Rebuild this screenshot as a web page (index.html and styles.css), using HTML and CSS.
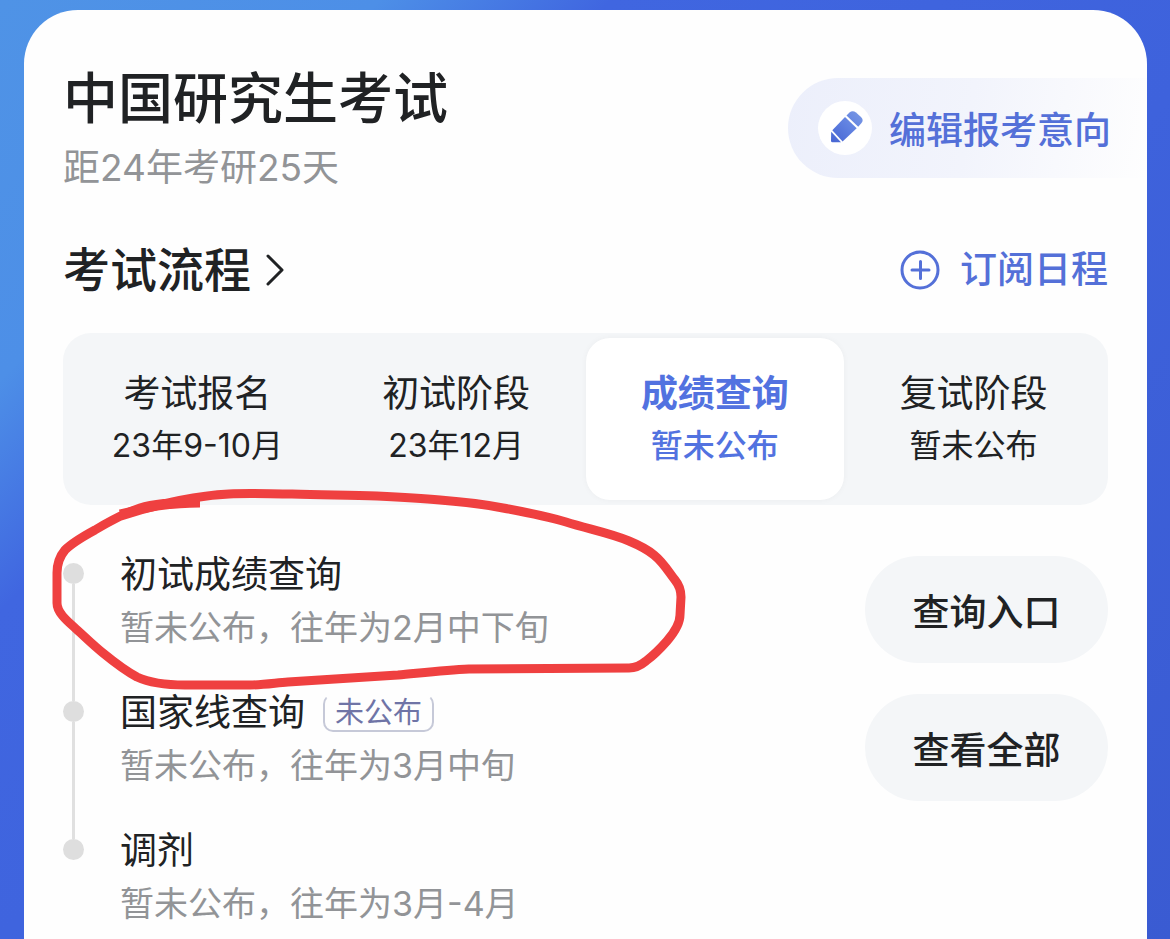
FILE: index.html
```html
<!DOCTYPE html>
<html lang="zh-CN">
<head>
    <meta charset="UTF-8">
    <meta name="viewport" content="width=device-width, initial-scale=1.0">
    <title>中国研究生考试</title>
    <link rel="stylesheet" href="styles.css">
</head>
<body>
    <main class="card">
        <header class="card-header">
            <div>
                <h1>中国研究生考试</h1>
                <p class="countdown">距24年考研25天</p>
            </div>
            <button type="button" class="edit-btn">
                <span class="edit-icon">
                    <svg viewBox="0 0 54 54" width="54" height="54" aria-hidden="true">
                        <defs>
                            <linearGradient id="pencil" gradientUnits="userSpaceOnUse" x1="42" y1="12" x2="16" y2="40">
                                <stop offset="0" stop-color="#7796e4"/>
                                <stop offset="0.500" stop-color="#5f80e0"/>
                                <stop offset="1" stop-color="#4a68d4"/>
                            </linearGradient>
                        </defs>
                        <g fill="url(#pencil)">
                            <path d="M28.500 14.500 31.500 11.500Q34.500 8.800 38 11.500L43 16Q46 19 43.500 22L40.200 25.800Z"/>
                            <path d="M27 16 38.700 27.200 24.600 40.600 14.300 29.300Z"/>
                            <path d="M13.200 30.800 23 41.300 14.500 41.300Q13 41.300 13 39.800Z"/>
                        </g>
                    </svg>
                </span>
                编辑报考意向
            </button>
        </header>

        <div class="section-header">
            <h2>
                <a href="#process" class="section-link">考试流程
                    <svg viewBox="0 0 20 34" width="20" height="34" aria-hidden="true">
                        <path d="M3 3 17 17 3 31" fill="none" stroke="currentColor" stroke-width="3" stroke-linecap="round" stroke-linejoin="round"/>
                    </svg>
                </a>
            </h2>
            <button type="button" class="subscribe-btn">
                <svg viewBox="0 0 40 40" width="40" height="40" aria-hidden="true">
                    <g fill="none" stroke="currentColor" stroke-width="3" stroke-linecap="round">
                        <circle cx="20" cy="20" r="18"/>
                        <path d="M12 20h17M20.500 11.500v17"/>
                    </g>
                </svg>
                订阅日程
            </button>
        </div>

        <div class="tabs" role="tablist" id="process">
            <button type="button" class="tab" role="tab" aria-selected="false">
                <span class="tab-name">考试报名</span>
                <span class="tab-date">23年9-10月</span>
            </button>
            <button type="button" class="tab" role="tab" aria-selected="false">
                <span class="tab-name">初试阶段</span>
                <span class="tab-date">23年12月</span>
            </button>
            <button type="button" class="tab active" role="tab" aria-selected="true">
                <span class="tab-name">成绩查询</span>
                <span class="tab-date">暂未公布</span>
            </button>
            <button type="button" class="tab" role="tab" aria-selected="false">
                <span class="tab-name">复试阶段</span>
                <span class="tab-date">暂未公布</span>
            </button>
        </div>

        <ol class="timeline">
            <li class="step">
                <div class="marker"><span class="dot"></span></div>
                <div class="step-text">
                    <h3>初试成绩查询</h3>
                    <p>暂未公布，往年为2月中下旬</p>
                </div>
                <button type="button" class="step-btn">查询入口</button>
                <!-- hand-drawn circle around the first step -->
                <svg class="scribble" viewBox="48 486 644 206" width="644" height="206" aria-hidden="true">
                    <g fill="none" stroke="#ef4040" stroke-width="9" stroke-linejoin="round">
                        <path d="M120 514C145 508 165 503 200 503"/>
                        <path d="M121 516C155 505 190 496 229 494C250 493 270 494 292 494C325 495 350 495 377 496C400 497 420 498 440 500C465 502 483 504 503 508C525 512 546 516 566 522C588 529 610 533 629 541C641 546 648 550 654 555C664 563 670 574 675 580C680 586 681 591 681 597L680 615C680 624 673 634 667 641C660 649 654 655 646 661C640 666 635 668 629 668L469 669C445 670 420 673 398 675L288 682C275 683 263 685 250 685L185 685C165 685 150 683 137 677C124 670 114 662 103 653C93 645 84 636 74 627C66 620 57 612 57 603L57 573C57 563 60 556 65 550C73 542 84 536 95 530C110 521 125 513 140 508C155 503 175 502 200 502"/>
                    </g>
                </svg>
            </li>
            <li class="step">
                <div class="marker"><span class="dot"></span></div>
                <div class="step-text">
                    <h3>国家线查询 <span class="tag">未公布</span></h3>
                    <p>暂未公布，往年为3月中旬</p>
                </div>
                <button type="button" class="step-btn">查看全部</button>
            </li>
            <li class="step">
                <div class="marker"><span class="dot"></span></div>
                <div class="step-text">
                    <h3>调剂</h3>
                    <p>暂未公布，往年为3月-4月</p>
                </div>
            </li>
        </ol>
    </main>
</body>
</html>
```
FILE: styles.css
```css
* {
    box-sizing: border-box;
}

body {
    margin: 0;
    min-height: 100vh;
    display: flex;
    padding: 10px 23px 0 24px;
    font-family: Inter, 'Noto Sans CJK SC', sans-serif;
    color: #202224;
    background: linear-gradient(135deg, #4f93e6 0%, #4d8fe7 18%, #4066e0 29%, #3e62dc 60%, #3a5bd2 100%);
}

h1, h2, h3, p, ol {
    margin: 0;
    padding: 0;
}

button {
    border: none;
    background: none;
    padding: 0;
    font-family: inherit;
    color: inherit;
    cursor: pointer;
}

svg {
    display: block;
    flex: none;
}

.card {
    flex: 1;
    min-width: 0;
    padding: 56px 39px 0;
    background: #fefefe;
    border-radius: 54px 54px 0 0;
}

/* header */
.card-header {
    display: flex;
    justify-content: space-between;
    align-items: flex-start;
    margin-right: -39px;
}

h1 {
    font-size: 55px;
    font-weight: 500;
    line-height: 64px;
}

.countdown {
    margin-top: 16px;
    font-size: 37px;
    line-height: 44px;
    color: #929497;
}

.edit-btn {
    display: flex;
    align-items: center;
    gap: 17px;
    height: 100px;
    margin-top: 12px;
    padding: 0 36px 0 30px;
    border-radius: 50px 0 0 50px;
    background: linear-gradient(100deg, #eceffb 0%, #f2f4fc 50%, #fefefe 100%);
    font-size: 37px;
    font-weight: 500;
    color: #5470d8;
}

.edit-icon {
    border-radius: 50%;
    background: #fff;
}

/* section title */
.section-header {
    display: flex;
    justify-content: space-between;
    align-items: center;
    height: 56px;
    margin-top: 52px;
}

.section-link {
    display: flex;
    align-items: center;
    gap: 14px;
    font-size: 47px;
    font-weight: 500;
    line-height: 56px;
    color: inherit;
    text-decoration: none;
}

.subscribe-btn {
    display: flex;
    align-items: center;
    gap: 20px;
    font-size: 37px;
    font-weight: 500;
    line-height: 44px;
    color: #5470d8;
}

/* tabs */
.tabs {
    display: grid;
    grid-template-columns: repeat(4, 1fr);
    margin-top: 35px;
    padding: 5px;
    border-radius: 28px;
    background: #f4f6f8;
}

.tab {
    display: flex;
    flex-direction: column;
    align-items: center;
    gap: 12px;
    padding: 34px 0 36px;
    border-radius: 24px;
}

.tab-name {
    font-size: 37px;
    line-height: 44px;
}

.tab-date {
    font-size: 32px;
    line-height: 36px;
}

.tab.active {
    background: #fff;
    box-shadow: 0 0 6px rgba(0, 0, 0, 0.04);
    color: #5272e0;
    font-weight: 500;
}

.tab.active .tab-name {
    font-weight: 700;
}

/* timeline */
.timeline {
    margin-top: 51px;
    list-style: none;
}

.step {
    position: relative;
    display: flex;
    align-items: flex-start;
}

.marker {
    display: flex;
    flex-direction: column;
    align-items: center;
    align-self: stretch;
    width: 21px;
    margin-right: 36px;
}

.marker::before,
.marker::after {
    content: '';
    width: 3px;
    background: #e0e0e0;
}

.marker::before {
    height: 7px;
}

.marker::after {
    flex: 1;
}

.step:first-child .marker::before,
.step:last-child .marker::after {
    background: none;
}

.dot {
    width: 21px;
    height: 21px;
    border-radius: 50%;
    background: #dedede;
}

.step-text {
    flex: 1;
}

h3 {
    display: flex;
    align-items: center;
    gap: 18px;
    height: 38px;
    font-size: 37px;
    font-weight: 400;
    line-height: 38px;
}

.step-text p {
    margin-top: 15px;
    font-size: 34px;
    line-height: 38px;
    color: #929497;
}

.tag {
    padding: 0 10px;
    border: 2px solid #c6c9d8;
    border-top-color: transparent;
    border-radius: 10px;
    font-size: 29px;
    line-height: 34px;
    color: #6f74a6;
}

.step-btn {
    width: 243px;
    height: 107px;
    margin-bottom: 31px;
    border-radius: 54px;
    background: #f4f6f8;
    font-size: 37px;
    font-weight: 500;
}

.scribble {
    position: absolute;
    left: -15px;
    top: -70px;
    z-index: 1;
    pointer-events: none;
}
```
